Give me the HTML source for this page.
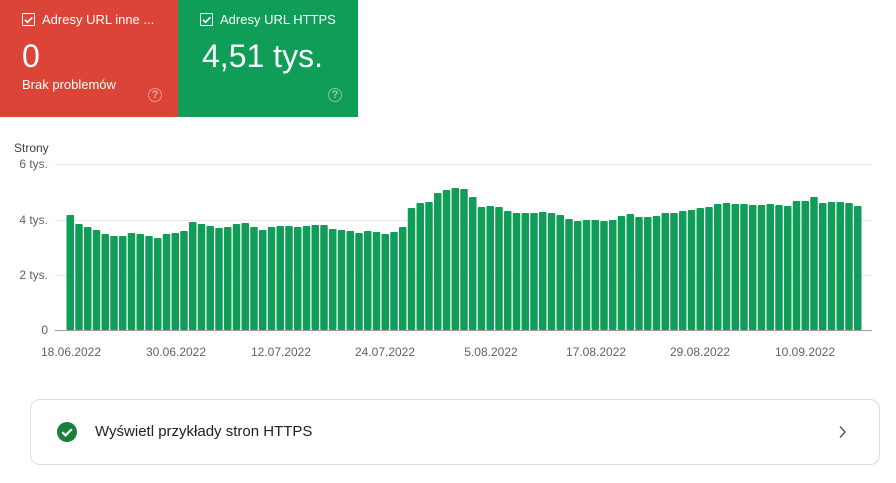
<!DOCTYPE html>
<html><head><meta charset="utf-8"><style>
html,body{margin:0;padding:0;background:#fff;width:896px;height:483px;overflow:hidden;font-family:"Liberation Sans",Arial,sans-serif;}
.tile{position:absolute;top:0;height:117px;color:#fff;}
.red{left:0;width:178px;background:#db4437;}
.green{left:178px;width:180px;background:#0f9d58;}
.cb{position:absolute;left:22px;top:13px;width:11px;height:11px;border:1.5px solid #fff;border-radius:1px;}
.lbl{position:absolute;left:42px;top:12px;font-size:13px;white-space:nowrap;}
.big{position:absolute;left:22px;top:36px;font-size:32px;line-height:40px;}
.sub{position:absolute;left:22px;top:77px;font-size:13px;}
.help{position:absolute;width:12px;height:12px;border:1.5px solid rgba(255,255,255,0.45);border-radius:50%;font-size:11px;line-height:12px;text-align:center;color:rgba(255,255,255,0.55);font-weight:bold;}
.card{position:absolute;left:30px;top:399px;width:848px;height:64px;border:1px solid #dadce0;border-radius:10px;}
.ctext{position:absolute;left:64px;top:23px;font-size:15px;color:#202124;}
</style></head><body>
<div class="tile red">
  <div class="cb"><svg width="11" height="11" style="position:absolute;left:0;top:0"><path d="M2 5.8l2.5 2.5L9.3 3.3" stroke="#fff" stroke-width="1.6" fill="none"/></svg></div>
  <div class="lbl">Adresy URL inne ...</div>
  <div class="big">0</div>
  <div class="sub">Brak problemów</div>
  <div class="help" style="left:148px;top:88px">?</div>
</div>
<div class="tile green">
  <div class="cb"><svg width="11" height="11" style="position:absolute;left:0;top:0"><path d="M2 5.8l2.5 2.5L9.3 3.3" stroke="#fff" stroke-width="1.6" fill="none"/></svg></div>
  <div class="lbl">Adresy URL HTTPS</div>
  <div class="big" style="left:24px">4,51 tys.</div>
  <div class="help" style="left:150px;top:88px">?</div>
</div>
<svg width="896" height="380" style="position:absolute;left:0;top:0" font-family="Liberation Sans, Arial, sans-serif" font-size="12" fill="#5f6368">
  <text x="14" y="152" fill="#3c4043">Strony</text>
  <text x="48" y="168" text-anchor="end">6 tys.</text>
  <text x="48" y="224" text-anchor="end">4 tys.</text>
  <text x="48" y="279" text-anchor="end">2 tys.</text>
  <text x="48" y="334" text-anchor="end">0</text>
  <line x1="55" y1="164.5" x2="872" y2="164.5" stroke="#e8eaed"/>
  <line x1="55" y1="220.5" x2="872" y2="220.5" stroke="#e8eaed"/>
  <line x1="55" y1="275.5" x2="872" y2="275.5" stroke="#e8eaed"/>
  <g id="bars" fill="#0f9d58"></g>
  <line x1="55" y1="330.5" x2="872" y2="330.5" stroke="#9aa0a6"/>
  <g text-anchor="middle">
    <text x="71" y="356">18.06.2022</text>
    <text x="176" y="356">30.06.2022</text>
    <text x="281" y="356">12.07.2022</text>
    <text x="385" y="356">24.07.2022</text>
    <text x="491" y="356">5.08.2022</text>
    <text x="596" y="356">17.08.2022</text>
    <text x="700" y="356">29.08.2022</text>
    <text x="805" y="356">10.09.2022</text>
  </g>
</svg>
<div class="card">
  <svg width="22" height="22" style="position:absolute;left:25px;top:21px"><circle cx="11" cy="11" r="10" fill="#188038"/><path d="M6.3 11.2l3.2 3.2 6.3-6.3" stroke="#fff" stroke-width="2.2" fill="none"/></svg>
  <div class="ctext">Wyświetl przykłady stron HTTPS</div>
  <svg width="12" height="14" style="position:absolute;left:806px;top:25px"><path d="M3 1.5l5 5.5-5 5.5" stroke="#5f6368" stroke-width="1.6" fill="none"/></svg>
</div>
<script>
var t=[215,224,227,230,234,236,236,233,234,236,238,234,233,231,222,224,226,228,227,224,223,227,230,227,226,226,227,226,225,225,229,230,231,233,231,232,234,232,227,208,203,202,193,190,
188,189,197,207,206,207,211,213,213,213,212,213,215,219,221,220,220,221,220,216,214,217,217,216,213,213,211,210,208,207,204,203,204,204,205,205,204,205,206,201,201,197,203,202,202,203,206];
var s='';for(var i=0;i<t.length;i++){var x=66.5+i*8.75;s+='<rect x="'+x+'" y="'+t[i]+'" width="7.5" height="'+(330-t[i])+'" rx="1"/>';}
document.getElementById('bars').innerHTML=s;
</script>
</body></html>
